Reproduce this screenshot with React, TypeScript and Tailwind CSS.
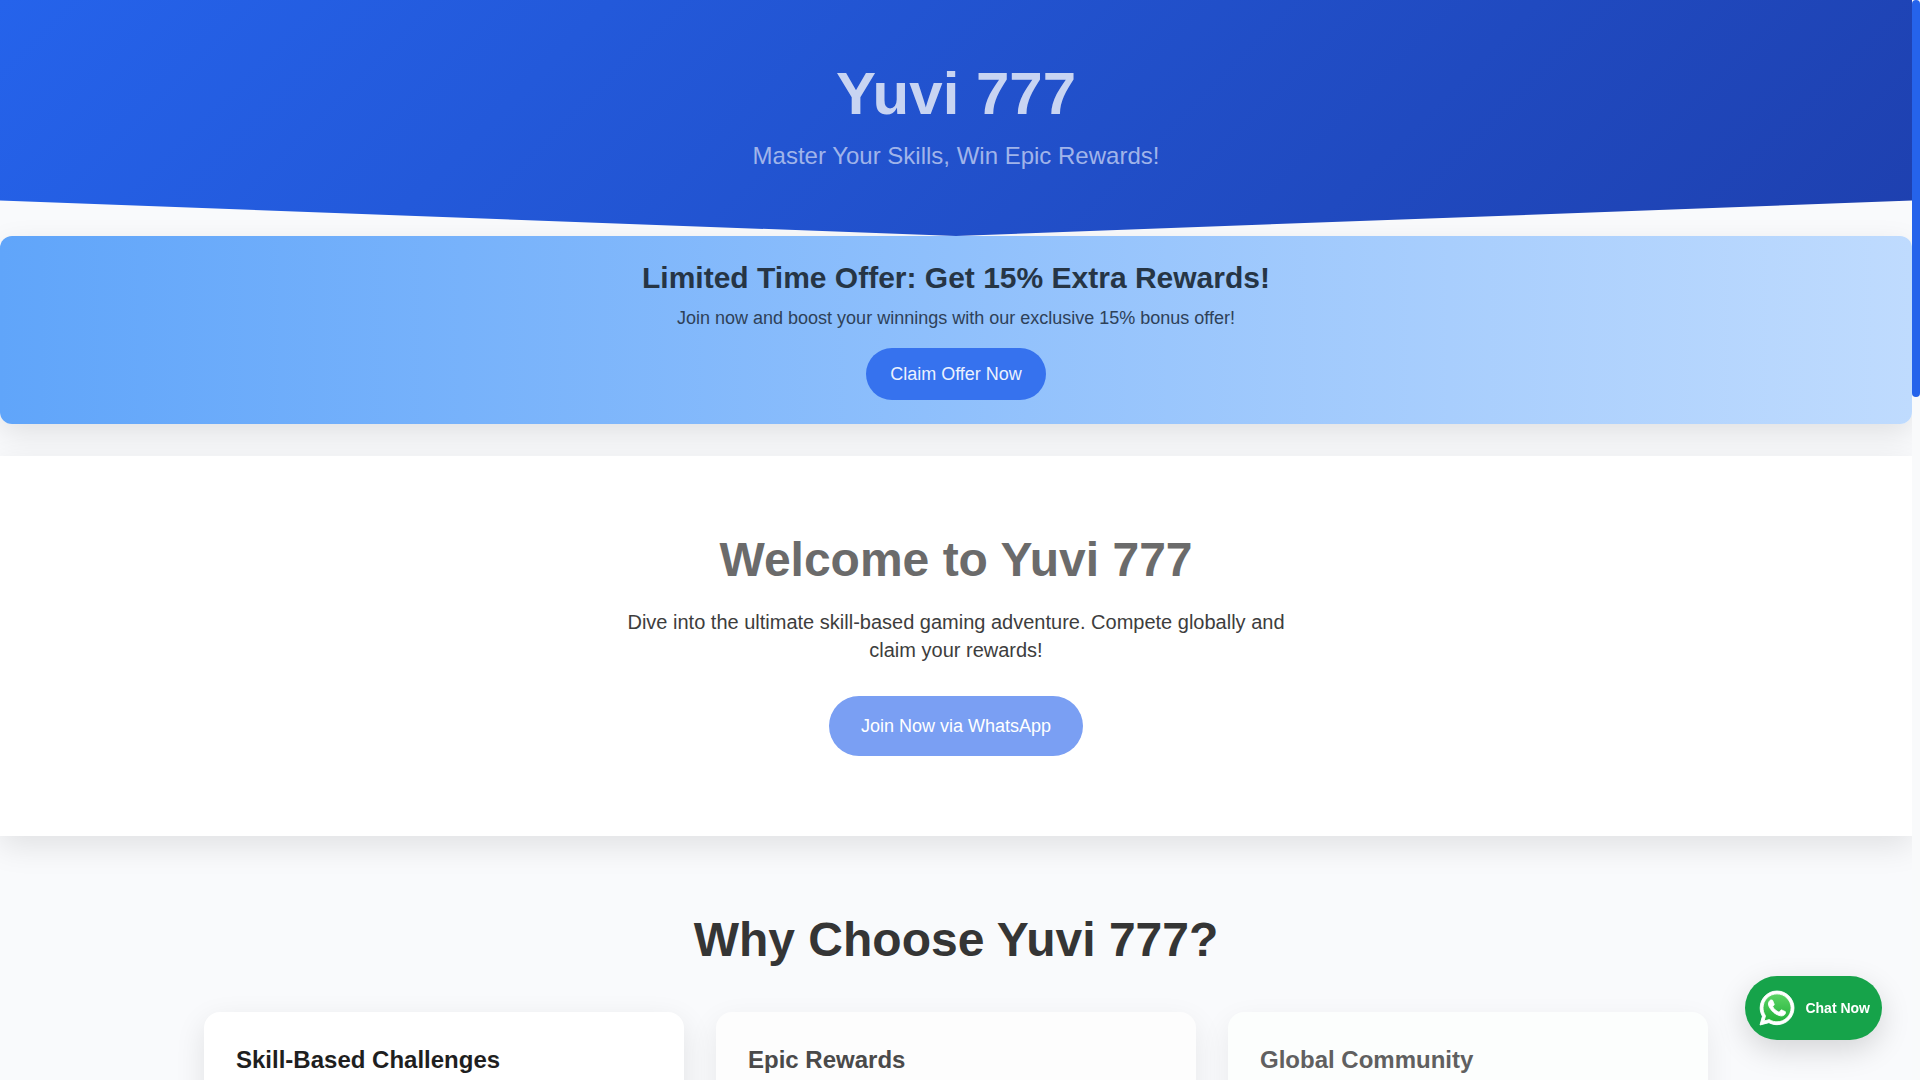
const FEATURES = [
  {
    title: "Skill-Based Challenges",
    card: "bg-white shadow-[0_10px_30px_rgba(0,0,0,0.1)]",
    text: "text-[#1f1f1f]",
  },
  {
    title: "Epic Rewards",
    card: "bg-[#fdfdfd] shadow-[0_10px_30px_rgba(0,0,0,0.08)]",
    text: "text-[#4a4a4a]",
  },
  {
    title: "Global Community",
    card: "bg-[#fcfefd] shadow-[0_10px_30px_rgba(0,0,0,0.07)]",
    text: "text-[#606060]",
  },
];

function WhatsAppIcon() {
  return (
    <svg viewBox="-40 -8 528 528" className="size-10" aria-hidden="true">
      <defs>
        <linearGradient id="wa-green" x1="0" y1="0" x2="0" y2="1">
          <stop offset="0" stopColor="#5fd668" />
          <stop offset="1" stopColor="#20b038" />
        </linearGradient>
        <filter id="wa-glow" x="-20%" y="-20%" width="140%" height="140%">
          <feGaussianBlur stdDeviation="10" />
        </filter>
      </defs>
      <path
        d="M224 32C102 32 2 132 2 254c0 39 10 77 30 111L0 480l118-31c32 18 69 27 106 27 122 0 224-100 224-222S346 32 224 32z"
        fill="#d5e8d8"
        opacity="0.7"
        filter="url(#wa-glow)"
      />
      <path
        d="M224 50C112 50 20 142 20 254c0 39 10 74 29 105L28 452l94-25c30 17 66 27 102 27 112 0 206-88 206-200S336 50 224 50z"
        fill="url(#wa-green)"
      />
      <path
        fill="#fff"
        stroke="#fff"
        strokeWidth="12"
        strokeLinejoin="round"
        d="M380.9 97.1C339 55.1 283.2 32 223.9 32c-122.4 0-222 99.6-222 222 0 39.1 10.2 77.3 29.6 111L0 480l117.7-30.9c32.4 17.7 68.9 27 106.1 27h.1c122.3 0 224.1-99.6 224.1-222 0-59.3-25.2-115-67.1-157zm-157 341.6c-33.2 0-65.7-8.9-94-25.7l-6.7-4-69.8 18.3L72 359.2l-4.4-7c-18.5-29.4-28.2-63.3-28.2-98.2 0-101.7 82.8-184.5 184.6-184.5 49.3 0 95.6 19.2 130.4 54.1 34.8 34.9 56.2 81.2 56.1 130.5 0 101.8-84.9 184.6-186.6 184.6zm101.2-138.2c-5.5-2.8-32.8-16.2-37.9-18-5.1-1.9-8.8-2.8-12.5 2.8-3.7 5.6-14.3 18-17.6 21.8-3.2 3.7-6.5 4.2-12 1.4-32.6-16.3-54-29.1-75.5-66-5.7-9.8 5.7-9.1 16.3-30.3 1.8-3.7.9-6.9-.5-9.7-1.4-2.8-12.5-30.1-17.1-41.2-4.5-10.8-9.1-10.5-12.5-10.5-3.2-.2-6.9-.2-10.6-.2-3.7 0-9.7 1.4-14.8 6.9-5.1 5.6-19.4 19-19.4 46.3 0 27.3 19.9 53.7 22.6 57.4 2.8 3.7 39.1 59.7 94.8 83.8 35.2 15.2 49 16.5 66.6 13.9 10.7-1.6 32.8-13.4 37.4-26.4 4.6-13 4.6-24.1 3.2-26.4-1.3-2.5-5-3.9-10.5-6.6z"
      />
    </svg>
  );
}

export default function App() {
  return (
    <div className="flex h-screen bg-[#f9fafc] font-['Liberation_Sans',Arial,sans-serif]">
      <div className="min-w-0 flex-1 overflow-x-hidden overflow-y-auto [scrollbar-width:none]">
        <header className="bg-[linear-gradient(135deg,#2563eb,#1e40af)] py-16 text-center [clip-path:polygon(0_0,100%_0,100%_85%,50%_100%,0_85%)]">
          <h1 className="text-6xl font-bold text-[#c8d4f2]">Yuvi 777</h1>
          <p className="mt-4 text-2xl text-[#a0b4ea]">Master Your Skills, Win Epic Rewards!</p>
        </header>

        <section className="rounded-xl bg-[linear-gradient(90deg,#60a5fa,#bfdbfe)] p-6 text-center shadow-[0_10px_30px_rgba(0,0,0,0.1)]">
          <h2 className="mb-2 text-3xl font-bold text-[#263545]">
            Limited Time Offer: Get 15% Extra Rewards!
          </h2>
          <p className="text-lg text-[#2e4158]">
            Join now and boost your winnings with our exclusive 15% bonus offer!
          </p>
          <a
            href="#offer"
            className="mt-4 inline-block rounded-full bg-[#3672ee] px-6 py-3 align-top text-lg text-[#ebf1fe]"
          >
            Claim Offer Now
          </a>
        </section>

        <section className="relative mt-8 bg-white px-4 py-20 text-center shadow-[0_10px_30px_rgba(0,0,0,0.1)]">
          <h2 className="mb-6 text-5xl font-bold text-[#6b6b6b]">Welcome to Yuvi 777</h2>
          <p className="mx-auto mb-8 max-w-2xl text-xl text-[#3d3d3d]">
            Dive into the ultimate skill-based gaming adventure. Compete globally and claim your
            rewards!
          </p>
          <a
            href="#join"
            className="inline-block rounded-full bg-[#7a9ff3] px-8 py-4 align-top text-lg text-white"
          >
            Join Now via WhatsApp
          </a>
        </section>

        <section className="mx-auto max-w-screen-2xl px-4 py-20">
          <h2 className="mb-12 text-center text-5xl font-bold text-[#353535]">
            Why Choose Yuvi 777?
          </h2>
          <div className="grid gap-8 md:grid-cols-3">
            {FEATURES.map((f) => (
              <article key={f.title} className={`min-h-40 rounded-2xl p-8 ${f.card}`}>
                <h3 className={`text-2xl font-bold ${f.text}`}>{f.title}</h3>
              </article>
            ))}
          </div>
        </section>
      </div>

      {/* scroll rail */}
      <div className="w-2 shrink-0 bg-[#f9fafb]" aria-hidden="true">
        <div className="h-[36.75%] rounded bg-[#2563eb]" />
      </div>

      <a
        href="#chat"
        className="fixed right-[38px] bottom-10 flex items-center gap-2 rounded-full bg-[#16a34a] p-3 text-sm font-bold text-white shadow-[0_10px_30px_rgba(0,0,0,0.15)]"
      >
        <WhatsAppIcon />
        Chat Now
      </a>
    </div>
  );
}
